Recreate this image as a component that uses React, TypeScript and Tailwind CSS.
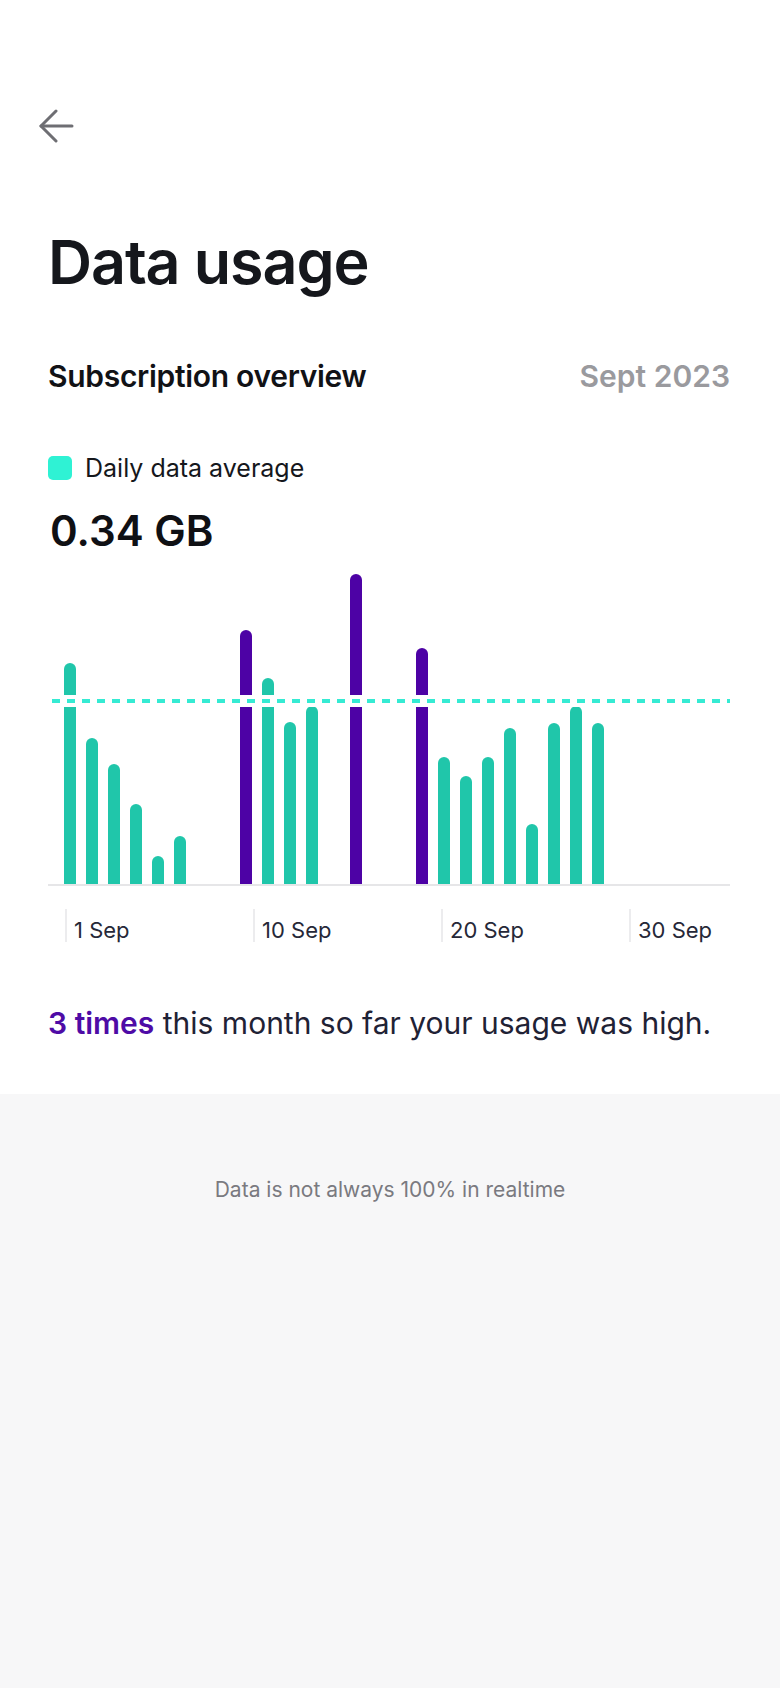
import React from 'react'

// daily usage, bar height in px above the baseline (0 = no data)
const usage: { h: number; high?: boolean }[] = [
  { h: 221 }, { h: 146 }, { h: 120 }, { h: 80 }, { h: 28 }, { h: 48 },
  { h: 0 }, { h: 0 },
  { h: 254, high: true }, { h: 206 }, { h: 162 }, { h: 178 },
  { h: 0 },
  { h: 310, high: true },
  { h: 0 }, { h: 0 },
  { h: 236, high: true }, { h: 127 }, { h: 108 }, { h: 127 }, { h: 156 },
  { h: 60 }, { h: 161 }, { h: 178 }, { h: 161 },
  { h: 0 }, { h: 0 }, { h: 0 }, { h: 0 }, { h: 0 },
]

const ticks = ['1 Sep', '10 Sep', '20 Sep', '30 Sep']

function BackArrow() {
  return (
    <svg width="36" height="36" viewBox="0 0 36 36" fill="none" className="block">
      <path d="M18 2 L3 17 L18 32" stroke="#6e6e73" strokeWidth="3" strokeLinecap="round" strokeLinejoin="round" />
      <path d="M3 17 H34" stroke="#6e6e73" strokeWidth="3" strokeLinecap="round" />
    </svg>
  )
}

function UsageChart() {
  return (
    <div>
      <div className="relative h-[330px] border-b-2 border-[#e6e6e8]">
        <div className="flex items-end h-full pl-[16px] gap-[10px]">
          {usage.map((day, i) => (
            <div key={i} className="w-[12px] shrink-0">
              {day.h > 0 && (
                <div
                  className={`w-full rounded-t-full ${day.high ? 'bg-[#4d02a5]' : 'bg-[#20c6aa]'}`}
                  style={{ height: day.h }}
                />
              )}
            </div>
          ))}
        </div>
        {/* average line */}
        <div className="absolute left-0 right-0 bottom-[177px] h-[12px] bg-white flex items-center pl-[4px]">
          <div className="w-full h-[4px] bg-[repeating-linear-gradient(90deg,#35ebd3_0_8px,transparent_8px_15px)]" />
        </div>
      </div>

      <div className="flex pl-[17px] mt-[23px]">
        {ticks.map((t) => (
          <div key={t} className="w-[188px] shrink-0 flex items-start gap-[7px]">
            <div className="w-[2px] h-[33px] bg-[#ececee]" />
            <span className="mt-[5px] text-[22px] leading-[32px] text-[#262838]">{t}</span>
          </div>
        ))}
      </div>
    </div>
  )
}

export default function App() {
  return (
    <div className="min-h-[1688px] bg-[#f7f7f8] font-['Inter',sans-serif]">
      <div className="bg-white pb-[53px]">
        <div className="pt-[109px] pl-[38px]">
          <BackArrow />
        </div>

        <div className="pl-[48px] pr-[50px]">
          <h1 className="mt-[81px] text-[61px] leading-[72px] font-semibold tracking-[-1.1px] text-[#15171c]">
            Data usage
          </h1>

          <div className="mt-[58px] flex items-center justify-between text-[30px] leading-[40px] font-semibold">
            <span className="text-[#111216] tracking-[-0.3px]">Subscription overview</span>
            <span className="text-[#9a9a9e]">Sept 2023</span>
          </div>

          <div className="mt-[56px] flex items-center gap-[13px]">
            <div className="w-[24px] h-[24px] rounded-[5px] bg-[#2ff2d4]" />
            <span className="text-[25px] leading-[32px] text-[#15171c]">Daily data average</span>
          </div>

          <div className="mt-[22px] text-[42px] leading-[50px] font-semibold text-[#0f1014] pl-[2px]">
            0.34 GB
          </div>

          <UsageChart />

          <p className="mt-[59px] text-[30px] leading-[36px] text-[#1f2235]">
            <span className="font-semibold text-[#4e0ba6]">3 times</span> this month so far your usage was high.
          </p>
        </div>
      </div>

      <div className="pt-[82px] text-center text-[21px] leading-[28px] text-[#7a7a80]">
        Data is not always 100% in realtime
      </div>
    </div>
  )
}
